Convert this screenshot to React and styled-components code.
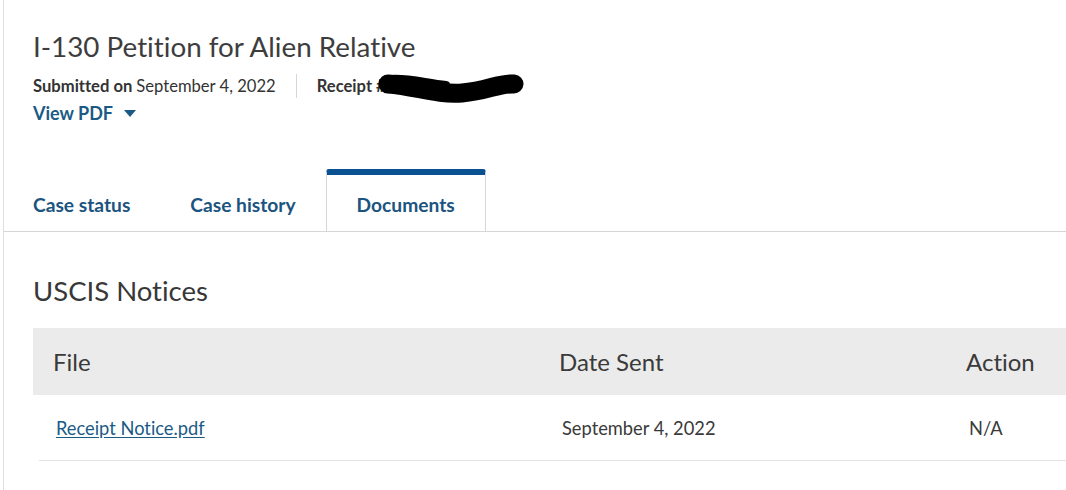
import React from 'react';
import styled, { createGlobalStyle } from 'styled-components';

const GlobalStyle = createGlobalStyle`
  html, body {
    margin: 0;
    padding: 0;
    background: #fff;
  }
  body {
    font-family: Lato, "Open Sans", "Liberation Sans", sans-serif;
    font-variant-ligatures: none;
    color: #323a45;
  }
`;

const Page = styled.div`
  margin-left: 3px;
  border-left: 1px solid #dedede;
  min-height: 490px;
  overflow: hidden;
`;

const Header = styled.div`
  padding: 29px 0 0 29px;
`;

const Title = styled.h1`
  margin: 0;
  font-size: 27.8px;
  font-weight: 400;
  line-height: 36px;
  color: #3d3d3d;
`;

const Meta = styled.div`
  display: flex;
  align-items: center;
  margin-top: 9px;
  font-size: 16.6px;
  color: #333;
  height: 24px;
`;

const MetaItem = styled.div`
  display: flex;
  align-items: center;
  b {
    font-weight: 700;
    margin-right: 4px;
  }
`;

const Divider = styled.span`
  width: 1px;
  height: 24px;
  background: #d6d6d6;
  margin: 0 20px;
`;

const Redacted = styled.svg`
  margin-left: -14px;
  margin-top: 4px;
`;

const ViewPdf = styled.a`
  display: inline-flex;
  align-items: center;
  gap: 11px;
  margin-top: 3px;
  font-size: 18px;
  font-weight: 700;
  color: #1b5a85;
  text-decoration: none;
  line-height: 24px;
`;

const Caret = styled.span`
  width: 0;
  height: 0;
  border-left: 6px solid transparent;
  border-right: 6px solid transparent;
  border-top: 7px solid #1b5a85;
`;

const TabBar = styled.div`
  display: flex;
  align-items: flex-end;
  margin-top: 44px;
  border-bottom: 1px solid #d6d6d6;
`;

const Tab = styled.div`
  box-sizing: border-box;
  height: ${p => (p.$active ? '63px' : '56px')};
  padding: 0 30px 0 ${p => (p.$first ? '29px' : '30px')};
  padding-top: 2px;
  display: flex;
  align-items: center;
  font-size: 19.2px;
  font-weight: 700;
  color: #1c5480;
  background: #fff;
  margin-bottom: ${p => (p.$active ? '-1px' : '0')};
  border: ${p => (p.$active ? '1px solid #d6d6d6' : 'none')};
  border-top: ${p => (p.$active ? '6px solid #0a5192' : 'none')};
  border-radius: ${p => (p.$active ? '3px 3px 0 0' : '0')};
`;

const Content = styled.div`
  padding: 41px 0 0 29px;
`;

const SectionTitle = styled.h2`
  margin: 0;
  font-size: 27.5px;
  font-weight: 400;
  line-height: 36px;
  color: #383838;
`;

const Table = styled.div`
  margin-top: 19px;
`;

const HeadRow = styled.div`
  display: grid;
  grid-template-columns: 506px 407px 1fr;
  align-items: center;
  height: 67px;
  background: #ebebeb;
  padding-left: 20px;
  font-size: 24px;
  color: #3a3a3a;
`;

const BodyRow = styled.div`
  display: grid;
  grid-template-columns: 506px 407px 1fr;
  align-items: center;
  height: 65px;
  margin-left: 6px;
  padding-left: 17px;
  border-bottom: 1px solid #e4e4e4;
  font-size: 18.3px;
  color: #3a3a3a;
`;

const FileLink = styled.a`
  color: #1b5a85;
  text-decoration: underline;
  text-underline-offset: 2px;
`;

const rows = [
  { file: 'Receipt Notice.pdf', date: 'September 4, 2022', action: 'N/A' },
];

export default function App() {
  return (
    <>
      <GlobalStyle />
      <Page>
        <Header>
          <Title>I-130 Petition for Alien Relative</Title>
          <Meta>
            <MetaItem>
              <b>Submitted on</b> September 4, 2022
            </MetaItem>
            <Divider />
            <MetaItem>
              <b>Receipt #</b>
              <Redacted width="150" height="34" viewBox="0 0 150 34">
                <path
                  d="M12 13 C 40 15, 60 24, 86 22 S 122 12, 138 13"
                  fill="none"
                  stroke="#000"
                  strokeWidth="19"
                  strokeLinecap="round"
                />
                <path
                  d="M14 8 C 30 6, 50 12, 70 14"
                  fill="none"
                  stroke="#000"
                  strokeWidth="8"
                  strokeLinecap="round"
                />
              </Redacted>
            </MetaItem>
          </Meta>
          <ViewPdf href="#">
            View PDF <Caret />
          </ViewPdf>
        </Header>

        <TabBar>
          <Tab $first>Case status</Tab>
          <Tab>Case history</Tab>
          <Tab $active>Documents</Tab>
        </TabBar>

        <Content>
          <SectionTitle>USCIS Notices</SectionTitle>
          <Table>
            <HeadRow>
              <div>File</div>
              <div>Date Sent</div>
              <div>Action</div>
            </HeadRow>
            {rows.map(r => (
              <BodyRow key={r.file}>
                <div><FileLink href="#">{r.file}</FileLink></div>
                <div>{r.date}</div>
                <div>{r.action}</div>
              </BodyRow>
            ))}
          </Table>
        </Content>
      </Page>
    </>
  );
}
